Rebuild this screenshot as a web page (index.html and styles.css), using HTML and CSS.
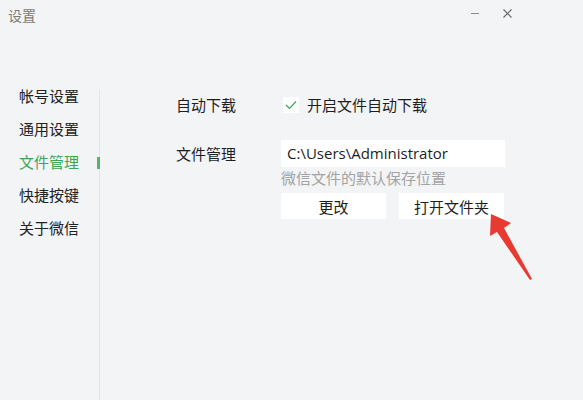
FILE: index.html
```html
<!DOCTYPE html>
<html>
<head>
<meta charset="UTF-8">
<title>设置</title>
<meta name="viewport" content="width=device-width, initial-scale=1.0">
<link rel="stylesheet" href="styles.css">
</head>
<body>

<div class="window">
  <div class="titlebar">
    <span class="window-title">设置</span>
    <div class="window-controls">
      <span class="control minimize"></span>
      <svg class="control close" width="9" height="9" viewBox="0 0 9 9"><path d="M0.5 0.5 L8.5 8.5 M8.5 0.5 L0.5 8.5" stroke="#666" stroke-width="1.1" fill="none"/></svg>
    </div>
  </div>

  <div class="main">
    <ul class="nav">
      <li class="nav-item">帐号设置</li>
      <li class="nav-item">通用设置</li>
      <li class="nav-item active">文件管理</li>
      <li class="nav-item">快捷按键</li>
      <li class="nav-item">关于微信</li>
    </ul>
    <div class="divider"></div>

    <div class="content">
      <div class="row">
        <span class="label">自动下载</span>
        <label class="checkbox">
          <span class="box"><svg width="12" height="10" viewBox="0 0 12 10"><path d="M1 5 L4.5 8.5 L11 1.5" stroke="#3aa757" stroke-width="1.2" fill="none"/></svg></span>
          开启文件自动下载
        </label>
      </div>

      <div class="row path-row">
        <span class="label">文件管理</span>
        <div class="field">
          <div class="path-input">C:\Users\Administrator</div>
          <div class="hint">微信文件的默认保存位置</div>
          <div class="buttons">
            <button class="btn">更改</button>
            <button class="btn">打开文件夹</button>
          </div>
        </div>
      </div>
    </div>
  </div>

  <!-- annotation arrow pointing at the button -->
  <svg class="arrow" width="60" height="80" viewBox="0 0 60 80">
    <polygon points="11,9 31,18 24,23 52,74 50,75 17,27 10,31" fill="#e93a32"/>
  </svg>
</div>

</body>
</html>
```

FILE: styles.css
```css
body {
  margin: 0;
  padding: 0;
  background-color: #f3f4f6;
  font-family: "Noto Sans CJK SC", "Noto Sans", sans-serif;
  color: #1e1e1e;
  -webkit-font-smoothing: antialiased;
}
.window {
  position: relative;
  width: 583px;
  height: 400px;
  overflow: hidden;
  background-color: #f3f4f6;
}
.titlebar {
  height: 32px;
  display: flex;
  align-items: center;
  justify-content: space-between;
  padding: 0 71px 0 8px;
}
.window-title {
  font-size: 14px;
  color: #7a7a7a;
  margin-top: -2px;
}
.window-controls {
  display: flex;
  align-items: center;
  gap: 24px;
  margin-top: -6px;
}
.minimize {
  display: block;
  width: 8px;
  height: 1px;
  background-color: #8a8a8a;
}
.main {
  display: flex;
  height: 368px;
}
.nav {
  list-style: none;
  margin: 0;
  padding: 47px 0 0 19px;
  width: 80px;
}
.nav-item {
  position: relative;
  height: 33px;
  line-height: 33px;
  font-size: 15px;
  color: #222;
}
.nav-item.active {
  color: #3aa757;
}
/* green marker sitting on the divider */
.nav-item.active::after {
  content: "";
  position: absolute;
  left: 78px;
  top: 12px;
  width: 3px;
  height: 12px;
  background-color: #52b66a;
}
.divider {
  width: 1px;
  margin-top: 58px;
  background-color: #e2e3e6;
}
.content {
  padding: 61px 0 0 76px;
  font-size: 15px;
}
.row {
  display: flex;
}
.label {
  width: 105px;
  line-height: 24px;
}
.checkbox {
  display: flex;
  align-items: center;
  gap: 8px;
  line-height: 24px;
  margin-left: 2px;
}
.box {
  width: 16px;
  height: 16px;
  background-color: #fff;
  display: flex;
  align-items: center;
  justify-content: center;
}
.path-row {
  margin-top: 23px;
}
.path-row .label {
  line-height: 27px;
}
.path-input {
  width: 218px;
  height: 27px;
  line-height: 27px;
  padding-left: 6px;
  background-color: #fff;
  font-family: "Open Sans", "Noto Sans", sans-serif;
  font-size: 15px;
  color: #1e1e1e;
}
.hint {
  margin-top: 1px;
  line-height: 20px;
  color: #a3a3a3;
}
.buttons {
  display: flex;
  gap: 13px;
  margin-top: 5px;
}
.btn {
  width: 105px;
  height: 26px;
  border: none;
  background-color: #fff;
  font-family: "Noto Sans CJK SC", sans-serif;
  font-size: 15px;
  color: #1e1e1e;
  padding: 0;
}
.arrow {
  position: absolute;
  left: 480px;
  top: 205px;
}
```
